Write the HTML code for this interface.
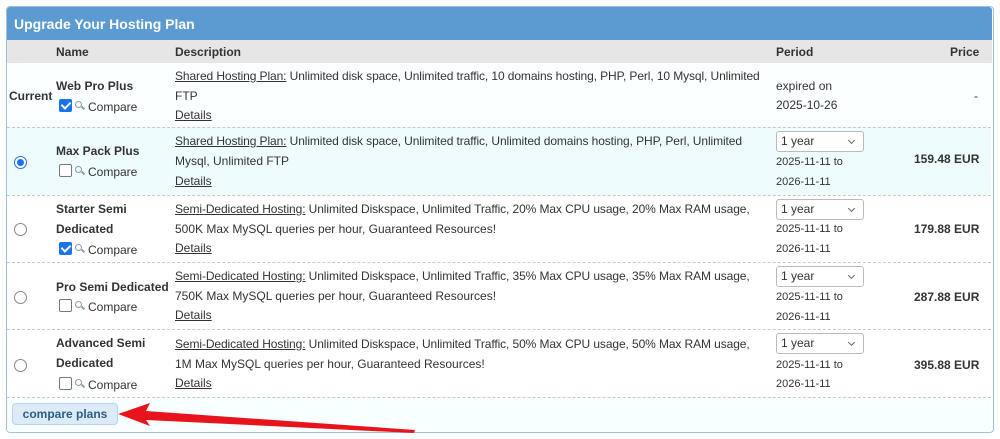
<!DOCTYPE html><html><head><style>
body{margin:0;background:#fff;font-family:"Liberation Sans",Arial,sans-serif;font-size:12px;color:#333;width:1000px;height:439px;overflow:hidden;position:relative}
.a{position:absolute;white-space:nowrap;line-height:14px}
.d{letter-spacing:-0.1px}
.b{font-weight:bold}
.u{text-decoration:underline}
.row{position:absolute;left:7px;width:984px;border-top:1px dashed #c8c8c8}
.sel{position:absolute;left:776px;width:88px;height:21px;border:1px solid #bbb;border-radius:3px;background:#fff;box-sizing:border-box;font-size:12px;line-height:19px;padding-left:4px}
.sel:after{content:"";position:absolute;right:9px;top:6px;width:4px;height:4px;border-right:1px solid #666;border-bottom:1px solid #666;transform:rotate(45deg)}
.rad{position:absolute;left:14px;width:13px;height:13px;border:1px solid #888;border-radius:50%;box-sizing:border-box;background:#fff}
.cb{position:absolute;left:59px;width:13px;height:13px;border:1px solid #777;border-radius:2px;box-sizing:border-box;background:#fff}
.cb.on{background:#1a73e8;border-color:#1a73e8}
.cb.on:after{content:"";position:absolute;left:3px;top:0px;width:4px;height:7px;border-right:2px solid #fff;border-bottom:2px solid #fff;transform:rotate(45deg)}
.mg{position:absolute;left:75px;width:5px;height:5px;border:1.5px solid #8a9aaa;border-radius:50%}
.mg:after{content:"";position:absolute;left:5px;top:5px;width:4px;height:2px;background:#8a9aaa;transform:rotate(45deg)}
.cmp{position:absolute;left:88px;white-space:nowrap;line-height:14px}
</style></head><body>
<div style="position:absolute;left:6px;top:6px;width:986px;height:425px;border:1px solid #9cc0de;border-radius:4px"></div>
<div style="position:absolute;left:7px;top:7px;width:985px;height:33px;background:#5b9bd1;border-radius:3px 3px 0 0"></div>
<div class="a b" style="left:14px;top:16px;color:#fff;font-size:14px;line-height:16px">Upgrade Your Hosting Plan</div>
<div style="position:absolute;left:7px;top:40px;width:985px;height:23px;background:#e6e6e6"></div>
<div class="a b" style="left:56px;top:45px">Name</div>
<div class="a b" style="left:175px;top:45px">Description</div>
<div class="a b" style="left:776px;top:45px">Period</div>
<div class="a b" style="left:950px;top:45px">Price</div>

<div style="position:absolute;left:7px;top:63px;width:985px;height:64px;background:#fbffff"></div>
<div class="row" style="top:127px;height:68px;background:#eefcfd"></div>
<div class="row" style="top:195px;height:67px;background:#fff"></div>
<div class="row" style="top:262px;height:67px;background:#fff"></div>
<div class="row" style="top:329px;height:68px;background:#fff"></div>
<div class="row" style="top:397px;height:33px;background:#f8ffff"></div>

<!-- row1 -->
<div class="a b" style="left:9px;top:89px">Current</div>
<div class="a b" style="left:56px;top:79px">Web Pro Plus</div>
<div class="cb on" style="top:99px"></div><div class="mg" style="top:101px"></div><div class="cmp" style="top:100px">Compare</div>
<div class="a d" style="left:175px;top:69px"><span class="u">Shared Hosting Plan:</span> Unlimited disk space, Unlimited traffic, 10 domains hosting, PHP, Perl, 10 Mysql, Unlimited</div>
<div class="a" style="left:175px;top:89px">FTP</div>
<div class="a u" style="left:175px;top:108px">Details</div>
<div class="a" style="left:776px;top:79px">expired on</div>
<div class="a" style="left:776px;top:98px">2025-10-26</div>
<div class="a" style="left:974px;top:89px">-</div>

<!-- row2 -->
<div class="rad" style="top:156px;border:1px solid #1a73e8"><div style="position:absolute;left:2px;top:2px;width:7px;height:7px;border-radius:50%;background:#1a73e8"></div></div>
<div class="a b" style="left:56px;top:144px">Max Pack Plus</div>
<div class="cb" style="top:164px"></div><div class="mg" style="top:166px"></div><div class="cmp" style="top:165px">Compare</div>
<div class="a d" style="left:175px;top:134px"><span class="u">Shared Hosting Plan:</span> Unlimited disk space, Unlimited traffic, Unlimited domains hosting, PHP, Perl, Unlimited</div>
<div class="a" style="left:175px;top:154px">Mysql, Unlimited FTP</div>
<div class="a u" style="left:175px;top:174px">Details</div>
<div class="sel" style="top:131px">1 year</div>
<div class="a" style="left:776px;top:155px;font-size:11px">2025-11-11 to</div>
<div class="a" style="left:776px;top:175px;font-size:11px">2026-11-11</div>
<div class="a b" style="left:914px;top:152px">159.48 EUR</div>

<!-- row3 -->
<div class="rad" style="top:223px"></div>
<div class="a b" style="left:56px;top:202px">Starter Semi</div>
<div class="a b" style="left:56px;top:222px">Dedicated</div>
<div class="cb on" style="top:242px"></div><div class="mg" style="top:244px"></div><div class="cmp" style="top:243px">Compare</div>
<div class="a d" style="left:175px;top:202px"><span class="u">Semi-Dedicated Hosting:</span> Unlimited Diskspace, Unlimited Traffic, 20% Max CPU usage, 20% Max RAM usage,</div>
<div class="a" style="left:175px;top:222px">500K Max MySQL queries per hour, Guaranteed Resources!</div>
<div class="a u" style="left:175px;top:241px">Details</div>
<div class="sel" style="top:199px">1 year</div>
<div class="a" style="left:776px;top:222px;font-size:11px">2025-11-11 to</div>
<div class="a" style="left:776px;top:242px;font-size:11px">2026-11-11</div>
<div class="a b" style="left:914px;top:222px">179.88 EUR</div>

<!-- row4 -->
<div class="rad" style="top:291px"></div>
<div class="a b" style="left:56px;top:280px">Pro Semi Dedicated</div>
<div class="cb" style="top:299px"></div><div class="mg" style="top:301px"></div><div class="cmp" style="top:300px">Compare</div>
<div class="a d" style="left:175px;top:269px"><span class="u">Semi-Dedicated Hosting:</span> Unlimited Diskspace, Unlimited Traffic, 35% Max CPU usage, 35% Max RAM usage,</div>
<div class="a" style="left:175px;top:289px">750K Max MySQL queries per hour, Guaranteed Resources!</div>
<div class="a u" style="left:175px;top:308px">Details</div>
<div class="sel" style="top:266px">1 year</div>
<div class="a" style="left:776px;top:290px;font-size:11px">2025-11-11 to</div>
<div class="a" style="left:776px;top:310px;font-size:11px">2026-11-11</div>
<div class="a b" style="left:914px;top:290px">287.88 EUR</div>

<!-- row5 -->
<div class="rad" style="top:359px"></div>
<div class="a b" style="left:56px;top:336px">Advanced Semi</div>
<div class="a b" style="left:56px;top:356px">Dedicated</div>
<div class="cb" style="top:377px"></div><div class="mg" style="top:379px"></div><div class="cmp" style="top:378px">Compare</div>
<div class="a d" style="left:175px;top:337px"><span class="u">Semi-Dedicated Hosting:</span> Unlimited Diskspace, Unlimited Traffic, 50% Max CPU usage, 50% Max RAM usage,</div>
<div class="a" style="left:175px;top:357px">1M Max MySQL queries per hour, Guaranteed Resources!</div>
<div class="a u" style="left:175px;top:376px">Details</div>
<div class="sel" style="top:333px">1 year</div>
<div class="a" style="left:776px;top:358px;font-size:11px">2025-11-11 to</div>
<div class="a" style="left:776px;top:377px;font-size:11px">2026-11-11</div>
<div class="a b" style="left:914px;top:358px">395.88 EUR</div>

<div style="position:absolute;left:12px;top:403px;width:106px;height:22px;background:#dcebf7;border:1px solid #b9d4ea;border-radius:4px;box-sizing:border-box;color:#2a5d8a;font-weight:bold;font-size:12px;line-height:20px;text-align:center">compare plans</div>
<svg style="position:absolute;left:0;top:0" width="1000" height="439"><polygon points="118,414 150,403 146,411 415,430 414,433 146,420 150,426" fill="#e8141c"/></svg>
</body></html>
